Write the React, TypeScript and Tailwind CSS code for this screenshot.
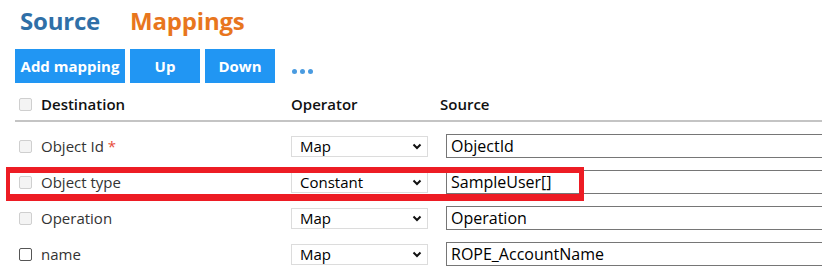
import React from "react";

const rows = [
  { key: 1, name: "Object Id", required: true, disabled: true, op: "Map", source: "ObjectId" },
  { key: 2, name: "Object type", required: false, disabled: true, op: "Constant", source: "SampleUser[]" },
  { key: 3, name: "Operation", required: false, disabled: true, op: "Map", source: "Operation" },
  { key: 4, name: "name", required: false, disabled: false, op: "Map", source: "ROPE_AccountName" },
];

const Check = ({ disabled }: { disabled: boolean }) => (
  <span
    className={`inline-block w-[13px] h-[13px] rounded-[2px] border ${
      disabled ? "bg-[#f4f4f4] border-[#cfcfcf]" : "bg-white border-[#555]"
    }`}
  />
);

const Chevron = () => (
  <svg width="10" height="7" viewBox="0 0 10 7" className="shrink-0">
    <path d="M1.5 1.5 L5 5 L8.5 1.5" fill="none" stroke="#111" strokeWidth="2" />
  </svg>
);

const App = () => {
  return (
    <div
      className="relative w-[822px] h-[276px] overflow-hidden bg-white pl-[15px]"
      style={{ fontFamily: '"Open Sans", "Noto Sans", sans-serif' }}
    >
      <div className="flex items-center gap-[30px] h-[32px] mt-[5px] pl-[5px] text-[24px] font-bold tracking-[-0.2px]">
        <h1 className="text-[#2f6fa7]">Source</h1>
        <h1 className="text-[#e8761e]">Mappings</h1>
      </div>

      <div className="flex items-center gap-[5px] mt-[12px]">
        <button className="h-[34px] w-[110px] bg-[#2196f3] text-white text-[15px] font-bold">Add mapping</button>
        <button className="h-[34px] w-[70px] bg-[#2196f3] text-white text-[15px] font-bold">Up</button>
        <button className="h-[34px] w-[70px] bg-[#2196f3] text-white text-[15px] font-bold">Down</button>
        <div className="flex items-center gap-[3px] ml-[12px] mt-[11px]">
          <span className="w-[5px] h-[5px] rounded-full bg-[#4a9be0]" />
          <span className="w-[5px] h-[5px] rounded-full bg-[#4a9be0]" />
          <span className="w-[5px] h-[5px] rounded-full bg-[#4a9be0]" />
        </div>
      </div>

      <div className="grid grid-cols-[276px_149px_1fr] items-center h-[39px] pt-[6px] border-b-2 border-[#c4c4c4] text-[15px] font-semibold text-[#111]">
        <div className="flex items-center gap-[9px] pl-[4px]">
          <Check disabled />
          <span>Destination</span>
        </div>
        <div>Operator</div>
        <div>Source</div>
      </div>

      <div className="pt-[6px]">
        {rows.map((row) => (
          <div key={row.key} className="grid grid-cols-[276px_155px_1fr] items-center h-[36px] text-[15px]">
            <div className="flex items-center gap-[9px] pl-[4px] text-[#333]">
              <Check disabled={row.disabled} />
              <span>
                {row.name}
                {row.required && <span className="text-[#e74c3c] ml-[4px]">*</span>}
              </span>
            </div>
            <div className="flex items-center justify-between h-[21px] w-[137px] border border-[#dcdcdc] pl-[8px] pr-[5px] text-black">
              <span>{row.op}</span>
              <Chevron />
            </div>
            <div className="flex items-center h-[24px] w-[420px] border border-[#767676] pl-[4px] text-[16px] text-black">
              {row.source}
            </div>
          </div>
        ))}
      </div>

      <div className="absolute left-[6px] top-[167px] w-[578px] h-[34px] border-[#ed1c24] border-t-[6px] border-b-[7px] border-l-4 border-r-[5px]" />
    </div>
  );
};

export default App;
